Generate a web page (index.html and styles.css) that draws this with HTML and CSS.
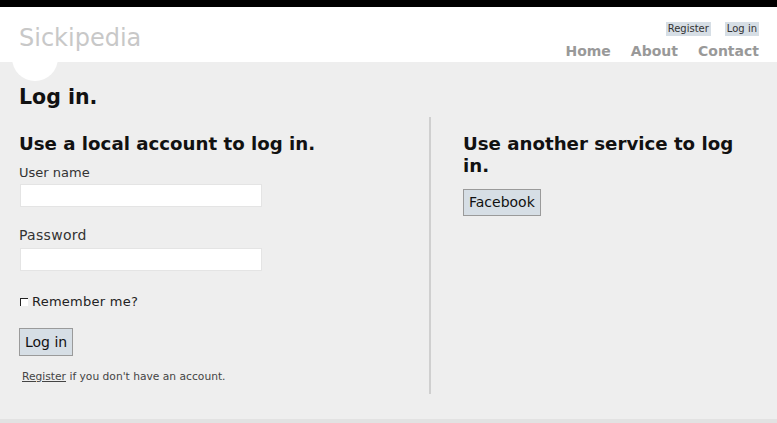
FILE: index.html
```html
<!DOCTYPE html>
<html>
<head>
<meta charset="utf-8">
<link rel="stylesheet" href="styles.css">
<title>Log in</title>
</head>
<body>
<div class="topbar"></div>
<header class="site-header">
  <div class="logo">Sickipedia</div>
  <div class="header-right">
    <div class="account-links">
      <a class="chip" href="#">Register</a>
      <a class="chip" href="#">Log in</a>
    </div>
    <nav class="main-nav">
      <a href="#">Home</a>
      <a href="#">About</a>
      <a href="#">Contact</a>
    </nav>
  </div>
  <div class="logo-bubble"></div>
</header>
<main class="content">
  <h1 class="page-title">Log in.</h1>
  <div class="columns">
    <section class="local">
      <h2 class="section-title">Use a local account to log in.</h2>
      <label class="field-label">User name</label>
      <input class="text-input first" type="text">
      <label class="field-label pw">Password</label>
      <input class="text-input second" type="password">
      <div class="remember">
        <input class="check" type="checkbox">
        <span>Remember me?</span>
      </div>
      <button class="btn login-btn">Log in</button>
      <p class="register-note"><a href="#">Register</a> if you don't have an account.</p>
    </section>
    <section class="social">
      <h2 class="section-title">Use another service to log in.</h2>
      <button class="btn fb-btn">Facebook</button>
    </section>
  </div>
</main>
<footer class="site-footer"></footer>
</body>
</html>
```
FILE: styles.css
```css
* { box-sizing: border-box; }
html, body { margin: 0; padding: 0; }
body {
  font-family: "DejaVu Sans", Verdana, sans-serif;
  color: #111;
  background: #eeeeee;
  height: 423px;
  overflow: hidden;
  display: flex;
  flex-direction: column;
}
.topbar { height: 7px; background: #000; flex: none; }
.site-header {
  position: relative;
  height: 55px;
  background: #fff;
  display: flex;
  justify-content: space-between;
  padding: 0 18px 0 19px;
  flex: none;
}
.logo {
  position: relative;
  z-index: 3;
  font-size: 24px;
  color: #c8c8c8;
  padding-top: 17px;
  line-height: 28px;
}
.logo-bubble {
  position: absolute;
  left: 12px;
  top: 28px;
  width: 46px;
  height: 46px;
  border-radius: 50%;
  background: #fff;
  z-index: 2;
}
.header-right {
  display: flex;
  flex-direction: column;
  align-items: flex-end;
  padding-top: 15px;
}
.account-links { display: flex; gap: 14px; }
.chip {
  font-size: 10px;
  line-height: 14px;
  padding: 0 2px;
  background: #d6dee5;
  color: #333;
  text-decoration: none;
}
.main-nav { display: flex; gap: 20px; margin-top: 7px; }
.main-nav a {
  font-size: 14px;
  font-weight: bold;
  color: #999;
  text-decoration: none;
  line-height: 17px;
}
.content {
  position: relative;
  flex: 1;
  padding: 23px 18px 0 19px;
}
.page-title {
  font-size: 20.5px;
  margin: 0;
  line-height: 24px;
}
.columns {
  display: flex;
  margin-top: 8px;
}
.section-title {
  font-size: 18.2px;
  margin: 0 0 10px;
  line-height: 22px;
}
.local {
  width: 412px;
  border-right: 2px solid #cfcfcf;
  padding: 16px 0 11px;
  display: flex;
  flex-direction: column;
  align-items: flex-start;
}
.social {
  flex: 1;
  padding: 16px 0 0 32px;
}
.field-label {
  font-size: 13px;
  color: #333;
  line-height: 16px;
}
.field-label.pw {
  margin-top: 20px;
  font-size: 14px;
  letter-spacing: 0.3px;
}
.text-input {
  width: 242px;
  height: 23px;
  border: 1px solid #e4e4e4;
  background: #fff;
  margin-left: 1px;
}
.text-input.first { margin-top: 3px; }
.text-input.second { margin-top: 5px; }
.remember {
  display: flex;
  align-items: center;
  gap: 4px;
  margin-top: 23px;
  font-size: 13px;
  letter-spacing: 0.25px;
  color: #222;
  margin-left: 1px;
}
.check {
  appearance: none;
  -webkit-appearance: none;
  margin: 0;
  width: 8px;
  height: 8px;
  border-top: 1.5px solid #222;
  border-left: 1.5px solid #222;
  background: #fff;
}
.btn {
  font-family: "DejaVu Sans", Verdana, sans-serif;
  font-size: 14px;
  line-height: 16px;
  padding: 5px 5px;
  background: #d6dee5;
  border: 1px solid #9a9a9a;
  color: #111;
}
.login-btn { margin-top: 19px; }
.fb-btn { margin-top: 2px; height: 27px; padding-top: 4px; }
.register-note {
  margin: 14px 0 0 3px;
  font-size: 10.7px;
  color: #444;
}
.register-note a { color: #444; }
.site-footer {
  flex: none;
  height: 4px;
  background: #e2e2e2;
}
```
